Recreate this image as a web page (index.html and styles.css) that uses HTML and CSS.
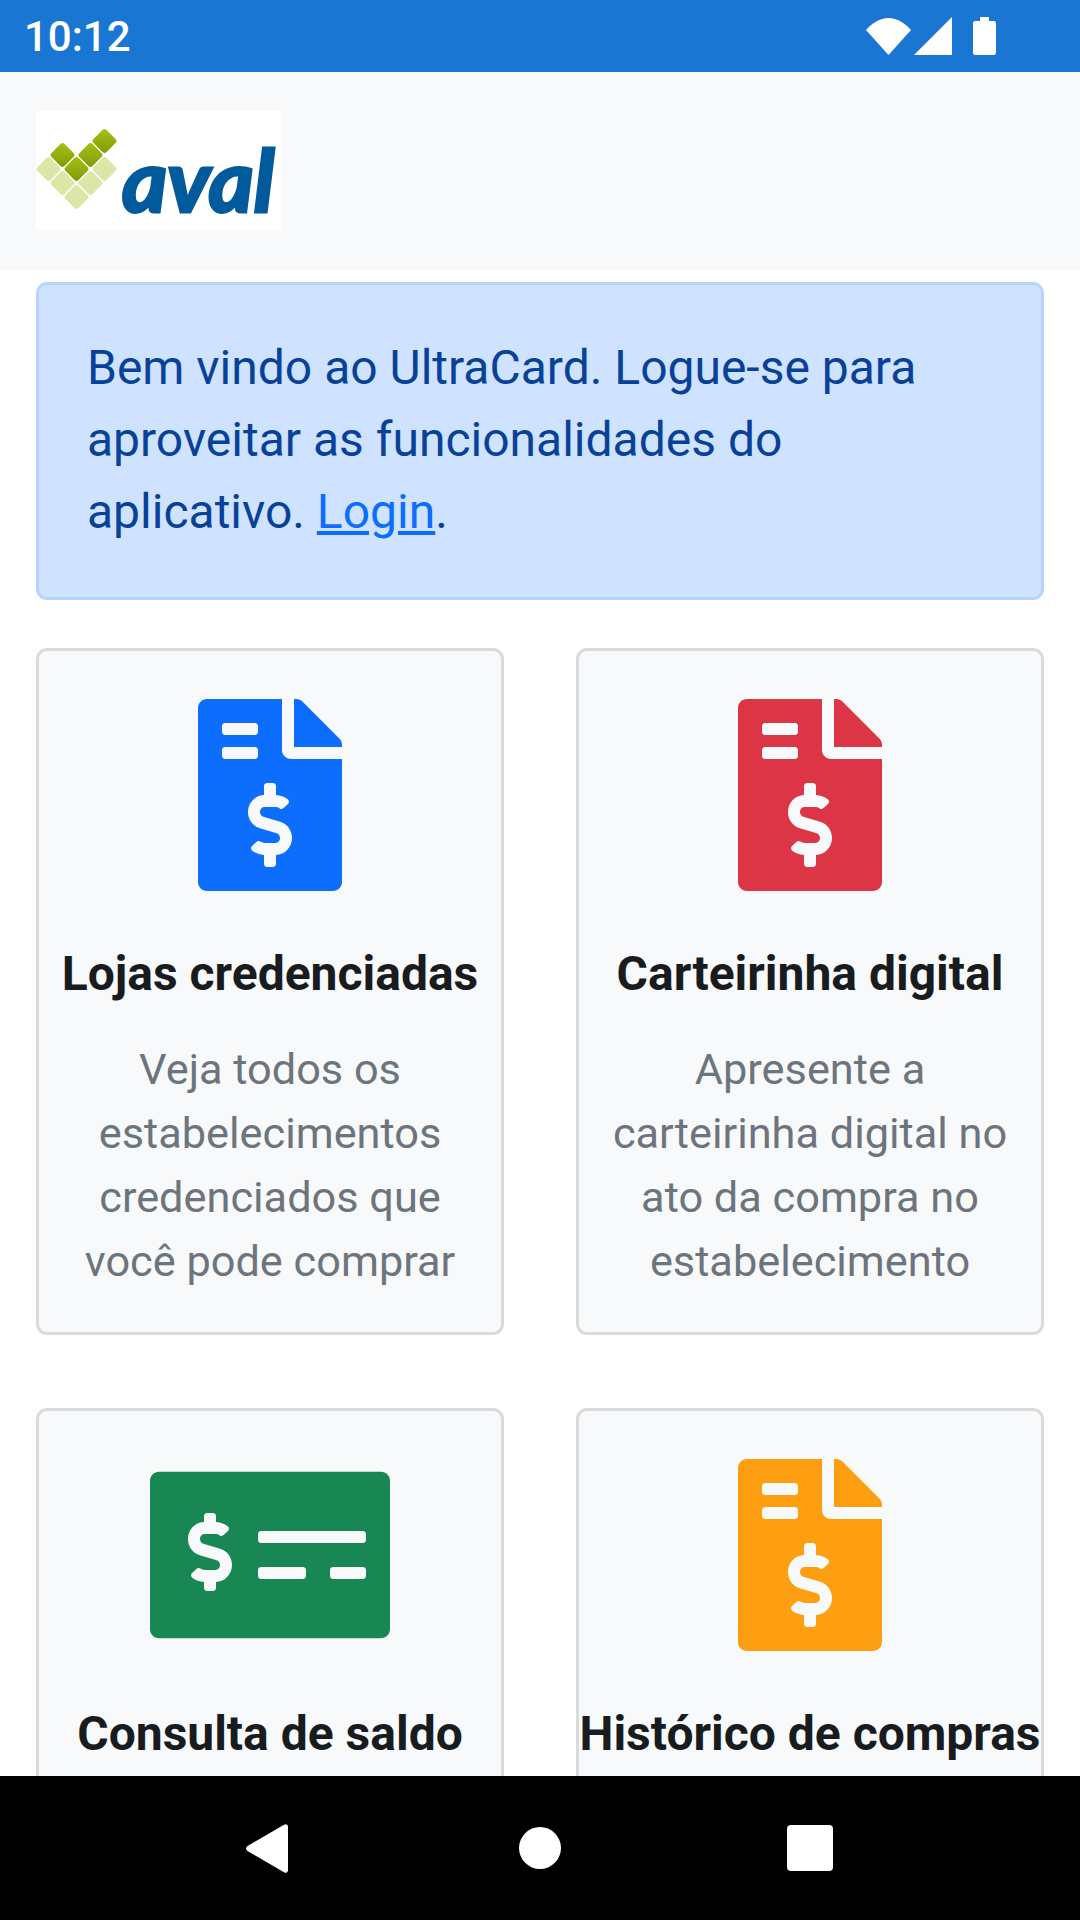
FILE: index.html
```html
<!DOCTYPE html>
<html lang="pt-BR">
<head>
  <meta charset="utf-8">
  <meta name="viewport" content="width=device-width, initial-scale=1">
  <title>UltraCard</title>
  <link rel="stylesheet" href="styles.css">
</head>
<body>
  <svg class="defs" width="0" height="0">
    <defs>
      <linearGradient id="leaf" x1="0" y1="0" x2="1" y2="1">
        <stop offset="0" stop-color="#aac213"/>
        <stop offset="1" stop-color="#7d9a06"/>
      </linearGradient>
      <symbol id="file-dollar" viewBox="0 0 384 512">
        <path d="M377 105L279.1 7c-4.5-4.5-10.6-7-17-7H256v128h128v-6.1c0-6.3-2.5-12.4-7-16.9zm-153 31V0H24C10.7 0 0 10.7 0 24v464c0 13.3 10.7 24 24 24h336c13.3 0 24-10.7 24-24V160H248c-13.2 0-24-10.8-24-24zM64 72c0-4.42 3.58-8 8-8h80c4.42 0 8 3.58 8 8v16c0 4.42-3.58 8-8 8H72c-4.42 0-8-3.58-8-8V72zm0 80v-16c0-4.42 3.58-8 8-8h80c4.42 0 8 3.58 8 8v16c0 4.42-3.58 8-8 8H72c-4.42 0-8-3.58-8-8zm144 263.88V440c0 4.42-3.58 8-8 8h-16c-4.42 0-8-3.58-8-8v-24.29c-11.29-.58-22.27-4.52-31.37-11.35-3.9-2.93-4.1-8.77-.57-12.14l11.75-11.21c2.77-2.64 6.89-2.76 10.13-.73 3.87 2.42 8.26 3.72 12.82 3.72h28.11c6.5 0 11.8-5.92 11.8-13.19 0-5.95-3.61-11.19-8.77-12.73l-45-13.5c-18.59-5.58-31.58-23.42-31.58-43.39 0-24.52 19.05-44.44 42.67-45.07V232c0-4.42 3.58-8 8-8h16c4.42 0 8 3.58 8 8v24.29c11.29.58 22.27 4.51 31.37 11.35 3.9 2.93 4.1 8.77.57 12.14l-11.75 11.21c-2.77 2.64-6.89 2.76-10.13.73-3.87-2.43-8.26-3.72-12.82-3.72h-28.11c-6.5 0-11.8 5.92-11.8 13.19 0 5.95 3.61 11.19 8.77 12.73l45 13.5c18.59 5.58 31.58 23.42 31.58 43.39 0 24.53-19.05 44.44-42.67 45.07z"/>
      </symbol>
      <symbol id="money-check" viewBox="0 0 640 512">
        <path d="M616 34H24C10.7 34 0 44.7 0 58v396c0 13.3 10.7 24 24 24h592c13.3 0 24-10.7 24-24V58c0-13.3-10.7-24-24-24zM176 327.88V344c0 4.42-3.58 8-8 8h-16c-4.42 0-8-3.58-8-8v-16.29c-11.29-.58-22.27-4.52-31.37-11.35-3.9-2.93-4.1-8.77-.57-12.14l11.75-11.21c2.77-2.64 6.89-2.76 10.13-.73 3.87 2.42 8.26 3.72 12.82 3.72h28.11c6.5 0 11.8-5.92 11.8-13.19 0-5.95-3.61-11.19-8.77-12.73l-45-13.5c-18.59-5.58-31.58-23.42-31.58-43.39 0-24.52 19.05-44.44 42.67-45.07V152c0-4.42 3.58-8 8-8h16c4.42 0 8 3.58 8 8v16.29c11.29.58 22.27 4.51 31.37 11.35 3.9 2.93 4.1 8.77.57 12.14l-11.75 11.21c-2.77 2.64-6.89 2.76-10.13.73-3.87-2.43-8.26-3.72-12.82-3.72h-28.11c-6.5 0-11.8 5.92-11.8 13.19 0 5.95 3.61 11.19 8.77 12.73l45 13.5c18.59 5.58 31.58 23.42 31.58 43.39 0 24.53-19.05 44.44-42.67 45.07zM416 312c0 4.42-3.58 8-8 8H296c-4.42 0-8-3.58-8-8v-16c0-4.42 3.58-8 8-8h112c4.42 0 8 3.58 8 8v16zm160 0c0 4.42-3.58 8-8 8h-80c-4.42 0-8-3.58-8-8v-16c0-4.42 3.58-8 8-8h80c4.42 0 8 3.58 8 8v16zm0-96c0 4.42-3.58 8-8 8H296c-4.42 0-8-3.58-8-8v-16c0-4.42 3.58-8 8-8h272c4.42 0 8 3.58 8 8v16z"/>
      </symbol>
    </defs>
  </svg>

  <div class="status-bar">
    <span class="clock">10:12</span>
    <div class="status-icons">
      <svg width="45" height="38" viewBox="0 0 45 38"><path d="M0 13C6 6 14 1 22.500 1S39 6 45 13L22.500 38z" fill="#fff"/></svg>
      <svg width="38" height="38" viewBox="0 0 38 38"><path d="M38 0V38H0z" fill="#fff"/></svg>
      <svg class="battery" width="23" height="38" viewBox="0 0 23 38"><path d="M7 0h9v4h5a2 2 0 0 1 2 2v30a2 2 0 0 1-2 2H2a2 2 0 0 1-2-2V6a2 2 0 0 1 2-2h5z" fill="#fff"/></svg>
    </div>
  </div>

  <header class="top-bar">
    <svg class="logo" width="245" height="119" viewBox="0 0 245 119">
      <rect width="245" height="119" fill="#fff"/>
      <g fill="#dde6a6">
        <rect x="-9.250" y="-9.250" width="18.500" height="18.500" rx="3" transform="translate(12.500 58) rotate(45)"/>
        <rect x="-9.250" y="-9.250" width="18.500" height="18.500" rx="3" transform="translate(68.500 58) rotate(45)"/>
        <rect x="-9.250" y="-9.250" width="18.500" height="18.500" rx="3" transform="translate(26.500 72) rotate(45)"/>
        <rect x="-9.250" y="-9.250" width="18.500" height="18.500" rx="3" transform="translate(54.500 72) rotate(45)"/>
        <rect x="-9.250" y="-9.250" width="18.500" height="18.500" rx="3" transform="translate(40.500 86) rotate(45)"/>
      </g>
      <g fill="url(#leaf)">
        <rect x="-9.250" y="-9.250" width="18.500" height="18.500" rx="3" transform="translate(68.500 30) rotate(45)"/>
        <rect x="-9.250" y="-9.250" width="18.500" height="18.500" rx="3" transform="translate(26.500 44) rotate(45)"/>
        <rect x="-9.250" y="-9.250" width="18.500" height="18.500" rx="3" transform="translate(54.500 44) rotate(45)"/>
        <rect x="-9.250" y="-9.250" width="18.500" height="18.500" rx="3" transform="translate(40.500 58) rotate(45)"/>
      </g>
      <text class="logo-word" x="86" y="101">aval</text>
    </svg>
  </header>

  <main class="content">
    <div class="alert">
      Bem vindo ao UltraCard. Logue-se para aproveitar as funcionalidades do aplicativo. <a href="#">Login</a>.
    </div>

    <div class="cards">
      <a class="card" href="#">
        <svg class="icon blue" width="144" height="192"><use href="#file-dollar"/></svg>
        <h5>Lojas credenciadas</h5>
        <p>Veja todos os estabelecimentos credenciados que você pode comprar</p>
      </a>
      <a class="card" href="#">
        <svg class="icon red" width="144" height="192"><use href="#file-dollar"/></svg>
        <h5>Carteirinha digital</h5>
        <p>Apresente a carteirinha digital no ato da compra no estabelecimento</p>
      </a>
      <a class="card" href="#">
        <svg class="icon green" width="240" height="192"><use href="#money-check"/></svg>
        <h5>Consulta de saldo</h5>
      </a>
      <a class="card" href="#">
        <svg class="icon orange" width="144" height="192"><use href="#file-dollar"/></svg>
        <h5>Histórico de compras</h5>
      </a>
    </div>
  </main>

  <nav class="nav-bar">
    <svg class="nav-back" width="42" height="49" viewBox="0 0 42 49"><path d="M1.500 22 38 .8Q42-1 42 3V46q0 4-4 2.200L1.500 27q-3-2.500 0-5z" fill="#fff"/></svg>
    <svg width="42" height="42" viewBox="0 0 42 42"><circle cx="21" cy="21" r="21" fill="#fff"/></svg>
    <svg width="46" height="46" viewBox="0 0 46 46"><rect width="46" height="46" rx="4" fill="#fff"/></svg>
  </nav>
</body>
</html>
```

FILE: styles.css
```css
* {
  box-sizing: border-box;
}
html, body {
  margin: 0;
  height: 100%;
}
body {
  display: flex;
  flex-direction: column;
  height: 1920px;
  overflow: hidden;
  background: #fff;
  font-family: Roboto, sans-serif;
}
.defs {
  position: absolute;
}

.status-bar {
  flex: 0 0 72px;
  display: flex;
  align-items: center;
  justify-content: space-between;
  padding: 0 84px 0 24px;
  background: #1976d2;
  color: #fff;
}
.clock {
  font-size: 42px;
  font-weight: 500;
}
.status-icons {
  display: flex;
  align-items: center;
  gap: 3px;
}
.battery {
  margin-left: 18px;
}

.top-bar {
  flex: 0 0 198px;
  padding: 39px 36px 0;
  background: #f8f9fa;
}
.logo {
  display: block;
}
.logo-word {
  font-family: Lato, sans-serif;
  font-size: 87px;
  font-weight: 700;
  font-style: italic;
  fill: #005a9c;
  stroke: #005a9c;
  stroke-width: 3px;
}

.content {
  flex: 1;
  min-height: 0;
  overflow: hidden;
  padding: 12px 36px 0;
}
.alert {
  padding: 47px 48px;
  height: 318px;
  border: 3px solid #b6d4fe;
  border-radius: 11px;
  background: #cfe2ff;
  color: #084298;
  font-size: 48px;
  line-height: 72px;
}
.alert a {
  color: #0d6efd;
}

.cards {
  display: grid;
  grid-template-columns: 1fr 1fr;
  grid-auto-rows: 687px;
  gap: 73px 72px;
  margin-top: 48px;
}
.card {
  display: flex;
  flex-direction: column;
  align-items: center;
  padding: 48px 0 0;
  border: 3px solid #d9dadb;
  border-radius: 11px;
  background: #f8f9fa;
  text-align: center;
  text-decoration: none;
}
.icon {
  display: block;
  flex: none;
  fill: currentColor;
}
.blue {
  color: #0d6efd;
}
.red {
  color: #dc3545;
}
.green {
  color: #198754;
}
.orange {
  color: #fd9f10;
}
.card h5 {
  margin: 51px 0 0;
  color: #191c1f;
  font-size: 48px;
  font-weight: 700;
  line-height: 64px;
  white-space: nowrap;
}
.card p {
  margin: 32px 24px 0;
  color: #6c757d;
  font-size: 43.300px;
  line-height: 64px;
}

.nav-bar {
  flex: 0 0 144px;
  display: grid;
  grid-template-columns: repeat(3, 270px);
  justify-content: center;
  justify-items: center;
  align-items: center;
  background: #000;
}
.nav-back {
  margin-right: 6px;
}
```
